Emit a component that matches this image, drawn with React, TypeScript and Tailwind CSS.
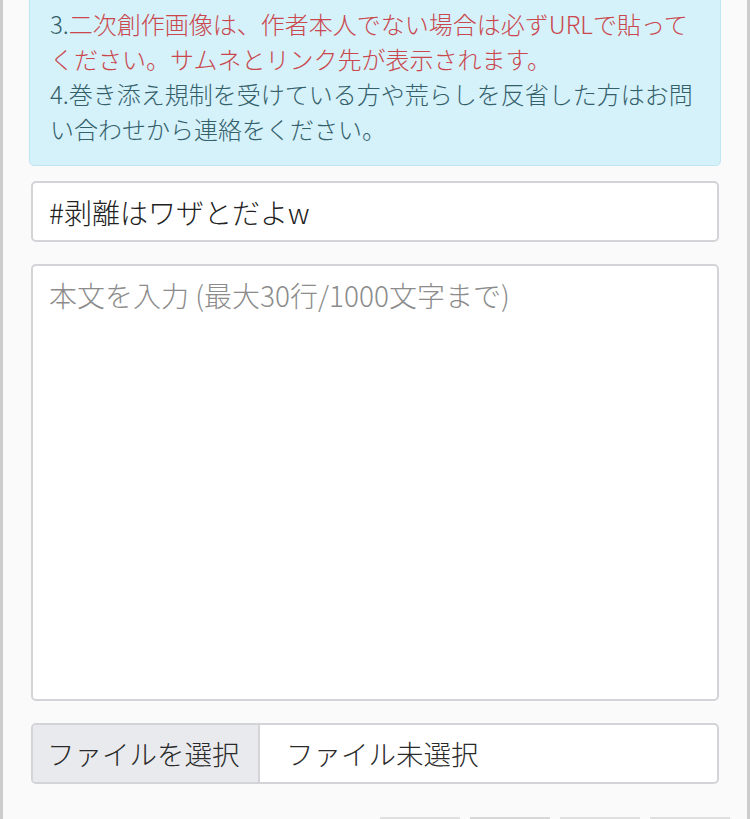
import React from "react";

const font = { fontFamily: '"Noto Sans CJK JP", "Noto Sans", sans-serif' };

export default function App() {
  return (
    <div
      className="w-[750px] h-[819px] overflow-hidden bg-[#fafafa] border-l-[3px] border-r-[3px] border-[#cdcdcd] px-[26px] font-light"
      style={font}
    >
      <div className="-mt-[15px] border border-[#bfe7f2] bg-[#d5f1fa] rounded-[5px] px-[20px] pt-[20px] pb-[19px] text-[24px] leading-[35px] text-[#34606a] whitespace-nowrap">
        <div>
          3.<span className="text-[#c9474d]">二次創作画像は、作者本人でない場合は必ずURLで貼って</span>
        </div>
        <div className="text-[#c9474d]">ください。サムネとリンク先が表示されます。</div>
        <div>4.巻き添え規制を受けている方や荒らしを反省した方はお問</div>
        <div>い合わせから連絡をください。</div>
      </div>

      <div className="mx-[2px] mt-[15px] h-[61px] bg-white border-2 border-[#d3d3d8] rounded-[5px] flex items-center px-[16px] text-[28px] text-[#222]">
        #剥離はワザとだよw
      </div>

      <div className="mx-[2px] mt-[22px] h-[437px] bg-white border-2 border-[#d3d3d8] rounded-[5px] px-[16px] pt-[9px] text-[28px] leading-[40px] text-[#8c8c8c]">
        本文を入力 (最大30行/1000文字まで)
      </div>

      <div className="mx-[2px] mt-[22px] h-[61px] bg-white border-2 border-[#d3d3d8] rounded-[5px] flex items-stretch text-[27.5px] text-[#2a2a2a] overflow-hidden">
        <div className="w-[227px] bg-[#e9eaee] border-r-2 border-[#d3d3d8] flex items-center pl-[14px]">
          ファイルを選択
        </div>
        <div className="flex items-center pl-[26px]">ファイル未選択</div>
      </div>

      <div className="mt-[33px] -mr-[9px] flex justify-end gap-[10px]">
        <div className="w-[80px] h-[40px] border-t-2 border-[#e0e0e0] bg-[#f3f3f3]" />
        <div className="w-[80px] h-[40px] border-t-2 border-[#d8d8d8] bg-[#f3f3f3]" />
        <div className="w-[80px] h-[40px] border-t-2 border-[#e0e0e0] bg-[#f3f3f3]" />
        <div className="w-[80px] h-[40px] border-t-2 border-[#e0e0e0] bg-[#f3f3f3]" />
      </div>
    </div>
  );
}
